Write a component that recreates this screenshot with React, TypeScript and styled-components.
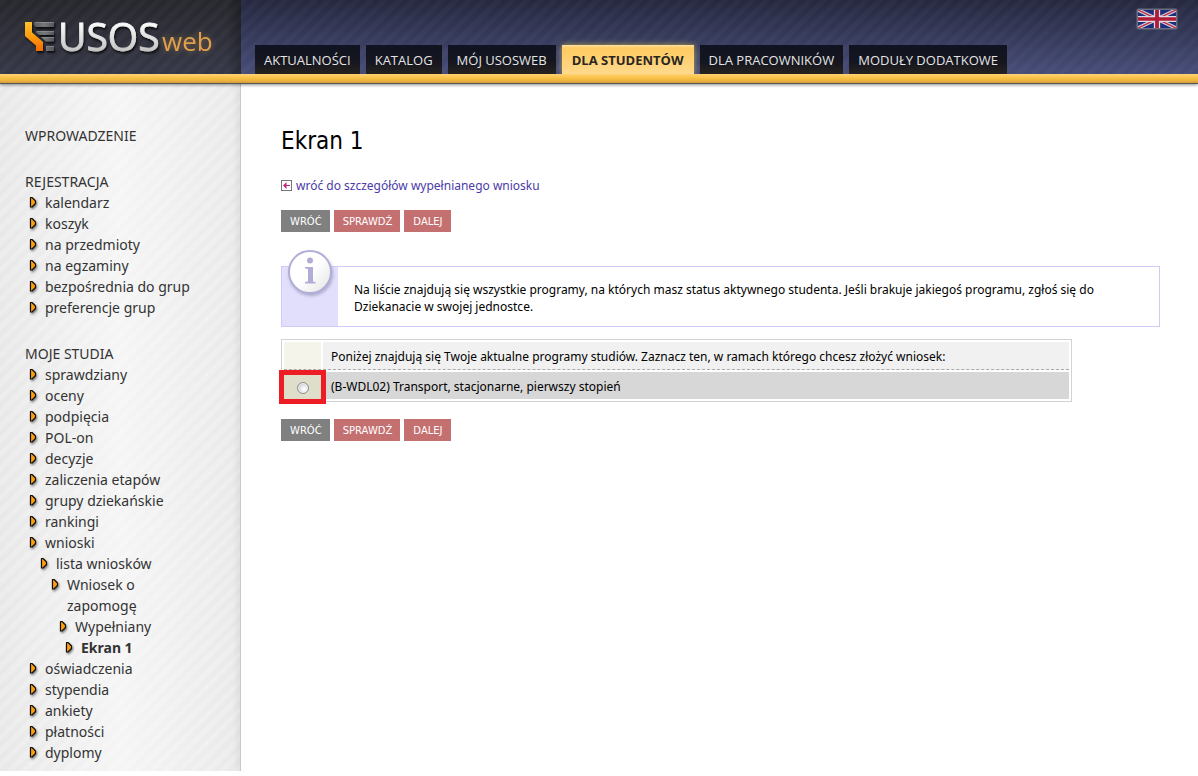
import React from 'react';
import styled, { createGlobalStyle, css } from 'styled-components';

const navFont = '"Open Sans", "Noto Sans", sans-serif';
const textFont = '"Noto Sans", "Open Sans", sans-serif';
const titleFont = '"DejaVu Sans Condensed", "DejaVu Sans", sans-serif';
const buttonFont = '"DejaVu Sans", sans-serif';

const GlobalStyle = createGlobalStyle`
  * { box-sizing: border-box; }
  body { margin: 0; background: #fff; font-family: ${textFont}; font-size: 12px; color: #000; }
  ul { list-style: none; margin: 0; padding: 0; }
  a { color: inherit; text-decoration: none; }
`;

const Header = styled.header`
  position: relative;
  display: flex;
  height: 84px;
  border-bottom: 1px solid #5a5852;
  box-shadow: 0 1px 3px rgba(0, 0, 0, 0.45);
  background:
    linear-gradient(#ffd27a, #fdc54a 35%, #eab03c 80%, #c99a3c) bottom / 100% 9px no-repeat,
    repeating-linear-gradient(135deg, rgba(255, 255, 255, 0.025) 0 5px, transparent 5px 10px),
    linear-gradient(#25283f, #474d78 74px);
`;

const LogoArea = styled.a`
  display: flex;
  width: 241px;
  height: 74px;
  flex: none;
  background:
    linear-gradient(90deg, transparent 94%, rgba(0, 0, 0, 0.25)),
    repeating-linear-gradient(135deg, rgba(255, 255, 255, 0.025) 0 5px, transparent 5px 10px),
    linear-gradient(#27282d, #363848);
`;

const Nav = styled.nav`
  flex: 1;
  height: 74px;
  padding-left: 14px;
  display: flex;
  align-items: flex-end;
  gap: 6px;
`;

const Tab = styled.a<{ $active?: boolean }>`
  height: 29px;
  padding: 0 9px;
  font: 13px/31px ${navFont};
  white-space: nowrap;
  color: #e4e4e4;
  background: linear-gradient(#101320, #15161f 60%, #27231f);
  ${p => p.$active && css`
    padding: 0 10px;
    color: #2a2622;
    font-weight: 700;
    background: linear-gradient(#ffe0a0, #ffcb62 3px, #ffd98c);
    box-shadow: 0 0 6px rgba(255, 225, 70, 0.6);
    clip-path: inset(-8px -8px 0 -8px);
  `}
`;

const Language = styled.a`
  align-self: flex-start;
  margin: 8px 20px 0 0;
  height: 21px;
`;

const Body = styled.div`
  display: flex;
  align-items: flex-start;
`;

const Sidebar = styled.nav`
  width: 241px;
  flex: none;
  padding: 41px 41px 8px 25px;
  border-right: 1px solid #c9c9c9;
  font: 14px/21px ${textFont};
  color: #333;
  background:
    linear-gradient(90deg, transparent 97%, rgba(0, 0, 0, 0.05)),
    repeating-linear-gradient(135deg, rgba(255, 255, 255, 0.2) 0 5px, transparent 5px 10px),
    linear-gradient(90deg, #e8e8e8, #f5f5f5 50%, #e9e9e9);
`;

const Section = styled.section`
  & + & { margin-top: 25px; }
`;

const SectionTitle = styled.a`
  display: block;
`;

const MenuItem = styled.li<{ $indent: number; $current?: boolean }>`
  display: flex;
  padding-left: ${p => p.$indent}px;
  font-weight: ${p => (p.$current ? 700 : 400)};
  svg { flex: none; margin: 3px 2px 0 4px; }
`;

const Main = styled.main`
  flex: 1;
  min-width: 0;
  padding: 40px 38px 20px 40px;
`;

const Title = styled.h1`
  margin: 0;
  font: 24px/34px ${titleFont};
`;

const BackLink = styled.a`
  display: flex;
  align-items: center;
  gap: 4px;
  margin-top: 19px;
  line-height: 17px;
  color: #4b3ba8;
`;

const Actions = styled.div`
  display: flex;
  gap: 4px;
  margin: 16px 0;
`;

const ActionButton = styled.button<{ $muted?: boolean }>`
  height: 22px;
  padding: 2px 8px 0 9px;
  border: 0;
  font: 10px/20px ${buttonFont};
  text-transform: uppercase;
  color: #fff;
  background: ${p => (p.$muted ? '#808080' : '#c47070')};
`;

const Info = styled.section`
  display: flex;
  min-height: 61px;
  margin-top: 34px;
  border: 1px solid #d0caf8;
`;

const InfoBadge = styled.div`
  width: 56px;
  flex: none;
  background: #e1dffb;
  svg { display: block; margin-top: -18px; }
`;

const InfoText = styled.p`
  margin: 0;
  padding: 14px 40px 0 16px;
  line-height: 17px;
`;

const Programs = styled.table`
  width: 90%;
  margin: 12px 0 17px;
  border: 1px solid #d3d3d3;
  border-collapse: separate;
  border-spacing: 2px;
  th, td { padding: 2px 8px 0; text-align: left; font-weight: 400; }
  thead th, thead td { height: 28px; background: #f1f1f1; border-bottom: 1px dashed #aaa; }
  tbody td { height: 27px; background: #d7d7d7; }
`;

const HeadMark = styled.td`
  && { background: #f5f4ea; width: 37px; }
`;

const SelectCell = styled.td`
  position: relative;
  && { padding: 0; background: #dedecb; text-align: center; }
`;

const Highlight = styled.span`
  position: absolute;
  inset: -2px -5px -5px;
  border: 5px solid #ee1c24;
  pointer-events: none;
`;

const Radio = styled.input`
  appearance: none;
  display: block;
  width: 12px;
  height: 12px;
  margin: 4px auto 0;
  border: 1px solid #8e8f8f;
  border-radius: 50%;
  background: radial-gradient(circle at 60% 60%, #fff 10%, #d2d5d8 60%, #b9bdc2);
  box-shadow: inset 0 0 0 1px #f4f4f4;
  &:checked { background: radial-gradient(circle, #345 35%, #eee 40%); }
`;

const Logo = () => (
  <svg width="240" height="74" viewBox="0 0 240 74" role="img" aria-label="USOSweb">
    <defs>
      <linearGradient id="silver" x1="0" y1="0" x2="0" y2="1">
        <stop offset="0.25" stopColor="#fdfdfd" />
        <stop offset="0.8" stopColor="#c4c4c4" />
      </linearGradient>
      <linearGradient id="flame" x1="0" y1="0" x2="0" y2="1">
        <stop offset="0" stopColor="#ffc22e" />
        <stop offset="0.5" stopColor="#ff9c10" />
        <stop offset="1" stopColor="#f06a00" />
      </linearGradient>
      <linearGradient id="bars" x1="0" y1="0" x2="1" y2="0">
        <stop offset="0" stopColor="#5a5b5b" />
        <stop offset="0.5" stopColor="#77787a" />
        <stop offset="1" stopColor="#55565a" />
      </linearGradient>
      <filter id="drop" x="-10%" y="-20%" width="125%" height="150%">
        <feDropShadow dx="1" dy="2" stdDeviation="1.2" floodColor="#000" floodOpacity="0.8" />
      </filter>
      <filter id="glow" x="-20%" y="-20%" width="140%" height="140%">
        <feDropShadow dx="0" dy="0" stdDeviation="3" floodColor="#e8a94a" floodOpacity="0.4" />
      </filter>
    </defs>
    <g filter="url(#drop)">
      <path d="M25 22h7v10.500l11 9.500v9h-7v-5.500L25 36z" fill="url(#flame)" />
      <path d="M34 22h20v5H36l-2-2zM36 31h18v4H39l-3-2.500zM41 37h13v4.500h-8zM46 46h8v5h-8z" fill="url(#bars)" />
      <path d="M35 22.500h19M37 31.500h17M42 37.500h12M46 46.500h8" stroke="#a0a2a2" strokeWidth="1" opacity="0.5" />
      <text x="58" y="51" fontFamily={navFont} fontSize="39" fill="url(#silver)" stroke="url(#silver)" strokeWidth="0.800">USOS</text>
    </g>
    <text x="162" y="51" fontFamily={navFont} fontSize="26" fill="#e0a04c" filter="url(#glow)">web</text>
  </svg>
);

const Flag = () => (
  <svg width="42" height="23" viewBox="0 0 42 23" role="img" aria-label="English">
    <rect x="0.500" y="0.500" width="41" height="21" rx="2" fill="#6b6f80" />
    <svg x="2" y="2" width="38" height="18" viewBox="0 0 60 30" preserveAspectRatio="none">
      <rect width="60" height="30" fill="#1c2f7c" />
      <path d="M0 0L60 30M60 0L0 30" stroke="#cfd0dc" strokeWidth="6" />
      <path d="M0 0L60 30M60 0L0 30" stroke="#c4344a" strokeWidth="2.500" />
      <path d="M30 0V30M0 15H60" stroke="#dcdae4" strokeWidth="10" />
      <path d="M30 0V30M0 15H60" stroke="#b01c38" strokeWidth="6" />
    </svg>
  </svg>
);

const Bullet = () => (
  <svg width="14" height="16" viewBox="0 0 14 16" aria-hidden="true">
    <defs>
      <filter id="bulletShadow" x="-50%" y="-50%" width="250%" height="250%">
        <feDropShadow dx="1" dy="1.500" stdDeviation="0.900" floodColor="#000" floodOpacity="0.5" />
      </filter>
    </defs>
    <path
      d="M1.500 2.500h1.500l3.500 3.500v2.500L3 12H1.500z"
      fill="#ff9f0a"
      stroke="#111"
      strokeWidth="1.200"
      strokeLinejoin="round"
      filter="url(#bulletShadow)"
    />
  </svg>
);

const BackIcon = () => (
  <svg width="11" height="11" viewBox="0 0 11 11" aria-hidden="true">
    <rect x="0.500" y="0.500" width="10" height="10" fill="#fff" stroke="#777" />
    <path d="M2 5.500L5.500 2V5H9V6H5.500V9z" fill="#c0287c" />
  </svg>
);

const InfoIcon = () => (
  <svg width="56" height="50" viewBox="0 0 56 50" aria-hidden="true">
    <defs>
      <linearGradient id="disc" x1="0" y1="0" x2="1" y2="1">
        <stop offset="0.5" stopColor="#fff" />
        <stop offset="1" stopColor="#e2e2e2" />
      </linearGradient>
      <filter id="discShadow" x="-20%" y="-20%" width="150%" height="150%">
        <feDropShadow dx="1" dy="2" stdDeviation="1.500" floodColor="#5c5a90" floodOpacity="0.4" />
      </filter>
    </defs>
    <circle cx="28" cy="23" r="21" fill="url(#disc)" stroke="#b0aed6" strokeWidth="2" filter="url(#discShadow)" />
    <circle cx="28" cy="11.500" r="3" fill="#b0aed6" />
    <path d="M23 18h8v14.500l2.500 0.500v1.500h-10.500v-1.500l3-0.500v-12.500l-3-0.500z" fill="#b0aed6" />
  </svg>
);

type Entry = { label: string; indent?: number; current?: boolean };

const menu: { title: string; items: Entry[] }[] = [
  { title: 'WPROWADZENIE', items: [] },
  {
    title: 'REJESTRACJA',
    items: ['kalendarz', 'koszyk', 'na przedmioty', 'na egzaminy', 'bezpośrednia do grup', 'preferencje grup'].map(label => ({ label })),
  },
  {
    title: 'MOJE STUDIA',
    items: [
      ...['sprawdziany', 'oceny', 'podpięcia', 'POL-on', 'decyzje', 'zaliczenia etapów', 'grupy dziekańskie', 'rankingi', 'wnioski'].map(label => ({ label })),
      { label: 'lista wniosków', indent: 11 },
      { label: 'Wniosek o zapomogę', indent: 22 },
      { label: 'Wypełniany', indent: 30 },
      { label: 'Ekran 1', indent: 36, current: true },
      ...['oświadczenia', 'stypendia', 'ankiety', 'płatności', 'dyplomy'].map(label => ({ label })),
    ],
  },
];

const tabs = ['AKTUALNOŚCI', 'KATALOG', 'MÓJ USOSWEB', 'DLA STUDENTÓW', 'DLA PRACOWNIKÓW', 'MODUŁY DODATKOWE'];

const FormActions = () => (
  <Actions>
    <ActionButton type="button" $muted>Wróć</ActionButton>
    <ActionButton type="button">Sprawdź</ActionButton>
    <ActionButton type="button">Dalej</ActionButton>
  </Actions>
);

export default function App() {
  return (
    <>
      <GlobalStyle />
      <Header>
        <LogoArea href="#"><Logo /></LogoArea>
        <Nav>
          {tabs.map(tab => (
            <Tab key={tab} href="#" $active={tab === 'DLA STUDENTÓW'}>{tab}</Tab>
          ))}
        </Nav>
        <Language href="#"><Flag /></Language>
      </Header>
      <Body>
        <Sidebar>
          {menu.map(section => (
            <Section key={section.title}>
              <SectionTitle href="#">{section.title}</SectionTitle>
              <ul>
                {section.items.map(item => (
                  <MenuItem key={item.label} $indent={item.indent ?? 0} $current={item.current}>
                    <Bullet />
                    <a href="#">{item.label}</a>
                  </MenuItem>
                ))}
              </ul>
            </Section>
          ))}
        </Sidebar>
        <Main>
          <Title>Ekran 1</Title>
          <BackLink href="#"><BackIcon />wróć do szczegółów wypełnianego wniosku</BackLink>
          <FormActions />
          <Info>
            <InfoBadge><InfoIcon /></InfoBadge>
            <InfoText>
              Na liście znajdują się wszystkie programy, na których masz status aktywnego studenta. Jeśli brakuje jakiegoś programu, zgłoś się do Dziekanacie w swojej jednostce.
            </InfoText>
          </Info>
          <Programs>
            <thead>
              <tr>
                <HeadMark />
                <th scope="col">Poniżej znajdują się Twoje aktualne programy studiów. Zaznacz ten, w ramach którego chcesz złożyć wniosek:</th>
              </tr>
            </thead>
            <tbody>
              <tr>
                <SelectCell>
                  <Radio type="radio" name="program" id="program-1" />
                  <Highlight />
                </SelectCell>
                <td><label htmlFor="program-1">(B-WDL02) Transport, stacjonarne, pierwszy stopień</label></td>
              </tr>
            </tbody>
          </Programs>
          <FormActions />
        </Main>
      </Body>
    </>
  );
}
